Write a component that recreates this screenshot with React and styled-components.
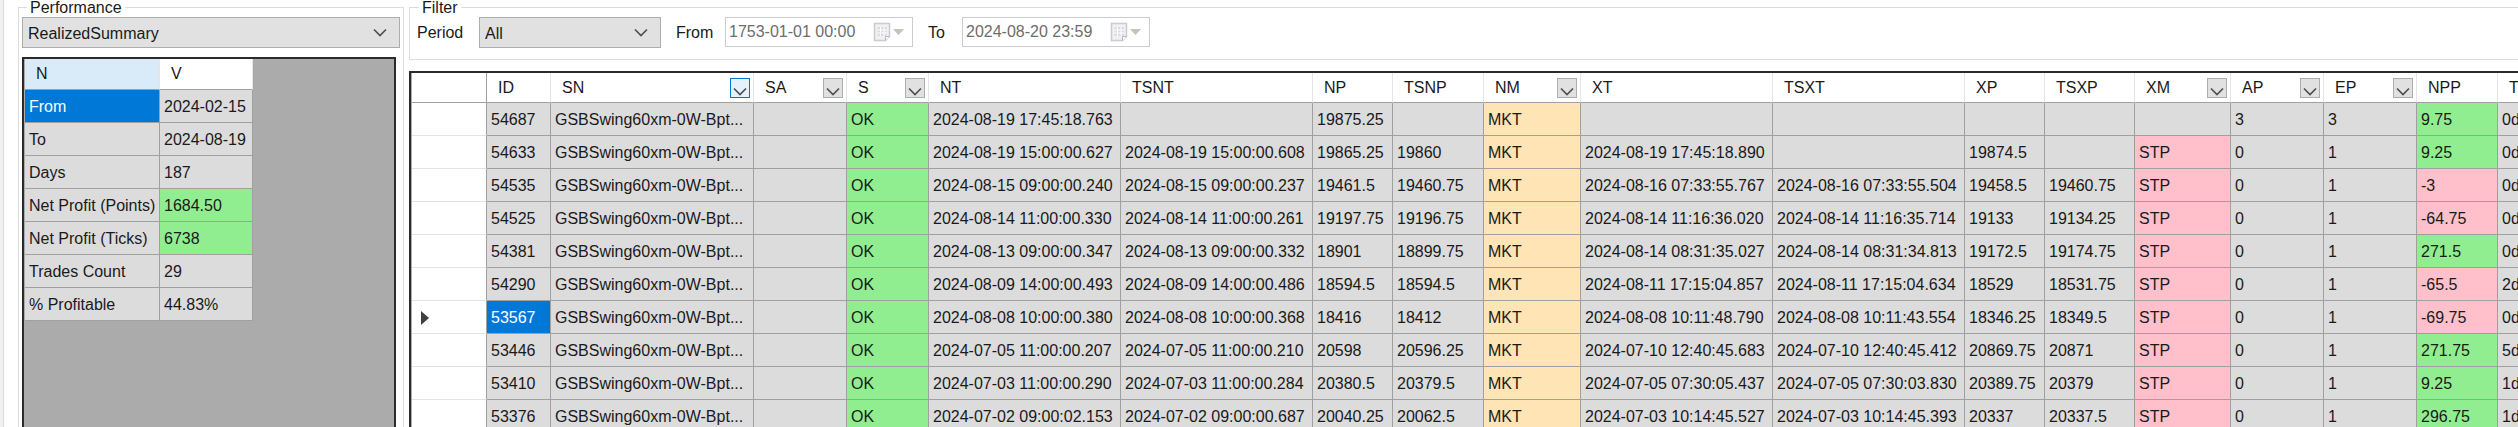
import React from "react";
import styled, { createGlobalStyle, css } from "styled-components";

const GlobalStyle = createGlobalStyle`
    * {
        box-sizing: border-box;
    }

    body {
        margin: 0;
        background: #fff;
    }

    body, button, input, select {
        color: #1a1a1a;
        font-family: "Liberation Sans", Arial, sans-serif;
        font-size: 16px;
    }
`;

const tones = {
    good: "#90ee90",
    bad: "#ffc0cb",
    market: "#ffe4b5"
};

const Page = styled.main`
    display: flex;
    gap: 5px;
    height: 100vh;
    padding-left: 15px;
    overflow: hidden;
    border-left: 3px solid #f0f0f0;
    box-shadow: inset 1px 0 #dcdcdc;
`;

const Sidebar = styled.div`
    display: flex;
    flex: 0 0 386px;
`;

const Content = styled.div`
    display: flex;
    flex: 1;
    flex-direction: column;
    gap: 11px;
    min-width: 0;
`;

const Group = styled.fieldset`
    display: flex;
    flex: ${props => (props.$fill ? 1 : "none")};
    flex-direction: ${props => (props.$fill ? "column" : "row")};
    gap: ${props => (props.$fill ? 9 : 15)}px;
    min-width: 0;
    margin: 0;
    padding: ${props => (props.$fill ? "2px 3px 0" : "2px 7px 10px")};
    border: 1px solid #dcdcdc;
    border-bottom-width: ${props => (props.$fill ? 0 : 1)}px;
    border-right-width: ${props => (props.$fill ? 1 : 0)}px;
`;

const Legend = styled.legend`
    margin-left: ${props => props.$indent}px;
    padding: 0 3px;
    line-height: 15px;
`;

const Field = styled.div`
    display: flex;
    align-items: flex-start;
`;

const Label = styled.label`
    width: ${props => props.$width}px;
    line-height: 32px;
`;

const SelectBox = styled.div`
    display: grid;
    grid-template-columns: 1fr 26px;
    align-items: center;
    width: ${props => props.$width};
    height: 31px;
    border: 1px solid #adadad;
    background: #e1e1e1;

    svg {
        grid-area: 1 / 2;
        pointer-events: none;
    }
`;

const Select = styled.select`
    grid-area: 1 / 1 / 2 / 3;
    width: 100%;
    height: 29px;
    padding: 1px 26px 0 5px;
    border: 0;
    background: transparent;
    appearance: none;
`;

const PickerBox = styled.div`
    display: flex;
    align-items: center;
    width: 188px;
    height: 30px;
    padding-right: 8px;
    border: 1px solid #cccccc;
`;

const PickerInput = styled.input`
    flex: 1;
    min-width: 0;
    padding: 0 0 0 3px;
    border: 0;
    background: transparent;
    color: #6d6d6d;
`;

const PickerButton = styled.button`
    display: flex;
    padding: 0;
    border: 0;
    background: transparent;
`;

const GridFrame = styled.div`
    flex: 1;
    min-height: 0;
    margin-right: ${props => (props.$open ? 0 : 4)}px;
    padding-left: 1px;
    overflow: hidden;
    border: 2px solid #2b2b2b;
    border-bottom: 0;
    border-right-width: ${props => (props.$open ? 0 : 2)}px;
    background: #ababab;
`;

const Table = styled.table`
    width: ${props => props.$width}px;
    table-layout: fixed;
    border-collapse: separate;
    border-spacing: 0;
`;

const HeadCell = styled.th`
    height: ${props => props.$height || 30}px;
    padding: 0 4px 0 11px;
    border-right: 1px solid ${props => (props.$corner ? "#a0a0a0" : "#e5e5e5")};
    border-bottom: 1px solid #a0a0a0;
    background: ${props => (props.$active ? "#d9ebf9" : "#fff")};
    font-weight: normal;
    text-align: left;
    white-space: nowrap;
`;

const HeadContent = styled.div`
    display: flex;
    align-items: center;
    justify-content: space-between;
`;

const FilterButton = styled.button`
    display: flex;
    align-items: flex-end;
    justify-content: center;
    width: 20px;
    height: 20px;
    margin-right: -1px;
    padding: 0 0 1px;
    border: 1px solid ${props => (props.$active ? "#0078d7" : "#adadad")};
    background: ${props => (props.$active ? "#e5f1fb" : "#e1e1e1")};
`;

const Cell = styled.td`
    height: 33px;
    padding: 2px 0 0 4px;
    overflow: hidden;
    border-right: 1px solid #a0a0a0;
    border-bottom: 1px solid #a0a0a0;
    background: ${props => tones[props.$tone] || "#dcdcdc"};
    text-overflow: clip;
    white-space: nowrap;

    ${props => props.$selected && css`
        background: #0078d7;
        color: #fff;
    `}
`;

const RowHeader = styled.th`
    padding: 2px 0 0 9px;
    border-right: 1px solid #a0a0a0;
    border-bottom: 1px solid #e3e3e3;
    background: #fff;
    text-align: left;

    svg {
        display: block;
    }
`;

const summary = [
    ["From", "2024-02-15"],
    ["To", "2024-08-19"],
    ["Days", "187"],
    ["Net Profit (Points)", "1684.50", "good"],
    ["Net Profit (Ticks)", "6738", "good"],
    ["Trades Count", "29"],
    ["% Profitable", "44.83%"]
];

const columns = [
    { name: "ID", width: 64 },
    { name: "SN", width: 203, filter: true, filtered: true },
    { name: "SA", width: 93, filter: true },
    { name: "S", width: 82, filter: true },
    { name: "NT", width: 192 },
    { name: "TSNT", width: 192 },
    { name: "NP", width: 80 },
    { name: "TSNP", width: 91 },
    { name: "NM", width: 97, filter: true },
    { name: "XT", width: 192 },
    { name: "TSXT", width: 192 },
    { name: "XP", width: 80 },
    { name: "TSXP", width: 90 },
    { name: "XM", width: 96, filter: true },
    { name: "AP", width: 93, filter: true },
    { name: "EP", width: 93, filter: true },
    { name: "NPP", width: 81 },
    { name: "T", width: 100 }
];

const rowHeaderWidth = 75;
const tradesWidth = columns.reduce((sum, column) => sum + column.width, rowHeaderWidth);

const SN = "GSBSwing60xm-0W-Bpt...";

const trades = [
    ["54687", SN, "", "OK", "2024-08-19 17:45:18.763", "", "19875.25", "", "MKT", "", "", "", "", "", "3", "3", "9.75", "0d"],
    ["54633", SN, "", "OK", "2024-08-19 15:00:00.627", "2024-08-19 15:00:00.608", "19865.25", "19860", "MKT", "2024-08-19 17:45:18.890", "", "19874.5", "", "STP", "0", "1", "9.25", "0d"],
    ["54535", SN, "", "OK", "2024-08-15 09:00:00.240", "2024-08-15 09:00:00.237", "19461.5", "19460.75", "MKT", "2024-08-16 07:33:55.767", "2024-08-16 07:33:55.504", "19458.5", "19460.75", "STP", "0", "1", "-3", "0d"],
    ["54525", SN, "", "OK", "2024-08-14 11:00:00.330", "2024-08-14 11:00:00.261", "19197.75", "19196.75", "MKT", "2024-08-14 11:16:36.020", "2024-08-14 11:16:35.714", "19133", "19134.25", "STP", "0", "1", "-64.75", "0d"],
    ["54381", SN, "", "OK", "2024-08-13 09:00:00.347", "2024-08-13 09:00:00.332", "18901", "18899.75", "MKT", "2024-08-14 08:31:35.027", "2024-08-14 08:31:34.813", "19172.5", "19174.75", "STP", "0", "1", "271.5", "0d"],
    ["54290", SN, "", "OK", "2024-08-09 14:00:00.493", "2024-08-09 14:00:00.486", "18594.5", "18594.5", "MKT", "2024-08-11 17:15:04.857", "2024-08-11 17:15:04.634", "18529", "18531.75", "STP", "0", "1", "-65.5", "2d"],
    ["53567", SN, "", "OK", "2024-08-08 10:00:00.380", "2024-08-08 10:00:00.368", "18416", "18412", "MKT", "2024-08-08 10:11:48.790", "2024-08-08 10:11:43.554", "18346.25", "18349.5", "STP", "0", "1", "-69.75", "0d"],
    ["53446", SN, "", "OK", "2024-07-05 11:00:00.207", "2024-07-05 11:00:00.210", "20598", "20596.25", "MKT", "2024-07-10 12:40:45.683", "2024-07-10 12:40:45.412", "20869.75", "20871", "STP", "0", "1", "271.75", "5d"],
    ["53410", SN, "", "OK", "2024-07-03 11:00:00.290", "2024-07-03 11:00:00.284", "20380.5", "20379.5", "MKT", "2024-07-05 07:30:05.437", "2024-07-05 07:30:03.830", "20389.75", "20379", "STP", "0", "1", "9.25", "1d"],
    ["53376", SN, "", "OK", "2024-07-02 09:00:02.153", "2024-07-02 09:00:00.687", "20040.25", "20062.5", "MKT", "2024-07-03 10:14:45.527", "2024-07-03 10:14:45.393", "20337", "20337.5", "STP", "0", "1", "296.75", "1d"]
];

const currentTrade = "53567";

const toneOf = (name, value) => {
    if (name === "S" && value === "OK") return "good";
    if (name === "NM" && value === "MKT") return "market";
    if (name === "XM" && value === "STP") return "bad";
    if (name === "NPP") return Number(value) < 0 ? "bad" : "good";
    return undefined;
};

const Chevron = () => (
    <svg width="14" height="9" viewBox="0 0 14 9" fill="none" stroke="#505050" strokeWidth="1.7" aria-hidden="true">
        <path d="M1 1.5l6 6 6-6" />
    </svg>
);

const CalendarIcon = () => (
    <svg width="31" height="20" viewBox="0 0 31 20" aria-hidden="true">
        <path d="M1.500 1.500h15v13l-4 4h-11z" fill="#f1f1f3" stroke="#cbcbcb" strokeWidth="1.500" />
        <path d="M4.500 5h9.500v9h-9.500z" fill="#d9dce2" />
        <path d="M4.500 8h9.500M4.500 11h9.500M7.500 5v9M11 5v9" stroke="#fff" />
        <path d="M12.500 18.500v-4h4" fill="#fff" stroke="#b5b5b5" />
        <path d="M20 7h11l-5.500 6z" fill="#c2c5b8" />
    </svg>
);

const CurrentRowIcon = () => (
    <svg width="8" height="14" viewBox="0 0 8 14" aria-hidden="true">
        <path d="M0 0l8 7-8 7z" fill="#404040" />
    </svg>
);

const DropDown = ({ width, ...rest }) => (
    <SelectBox $width={width}>
        <Select {...rest} />
        <Chevron />
    </SelectBox>
);

const DatePicker = ({ id, value, name }) => (
    <PickerBox>
        <PickerInput id={id} type="text" defaultValue={value} disabled />
        <PickerButton type="button" aria-label={`Open ${name} calendar`} disabled>
            <CalendarIcon />
        </PickerButton>
    </PickerBox>
);

const SummaryTable = () => (
    <Table $width={228}>
        <colgroup>
            <col width="135" />
            <col width="93" />
        </colgroup>
        <thead>
            <tr>
                <HeadCell $height={31} $active>N</HeadCell>
                <HeadCell $height={31}>V</HeadCell>
            </tr>
        </thead>
        <tbody>
            {summary.map(([name, value, tone], index) => (
                <tr key={name}>
                    <Cell $selected={index === 0}>{name}</Cell>
                    <Cell $tone={tone}>{value}</Cell>
                </tr>
            ))}
        </tbody>
    </Table>
);

const TradesTable = () => (
    <Table $width={tradesWidth}>
        <colgroup>
            <col width={rowHeaderWidth} />
            {columns.map(column => <col key={column.name} width={column.width} />)}
        </colgroup>
        <thead>
            <tr>
                <HeadCell $corner />
                {columns.map(column => (
                    <HeadCell key={column.name}>
                        <HeadContent>
                            {column.name}
                            {column.filter && (
                                <FilterButton type="button" aria-label={`Filter ${column.name}`} $active={column.filtered}>
                                    <Chevron />
                                </FilterButton>
                            )}
                        </HeadContent>
                    </HeadCell>
                ))}
            </tr>
        </thead>
        <tbody>
            {trades.map(trade => (
                <tr key={trade[0]}>
                    <RowHeader scope="row">{trade[0] === currentTrade && <CurrentRowIcon />}</RowHeader>
                    {trade.map((value, index) => (
                        <Cell
                            key={columns[index].name}
                            $tone={toneOf(columns[index].name, value)}
                            $selected={index === 0 && value === currentTrade}
                        >
                            {value}
                        </Cell>
                    ))}
                </tr>
            ))}
        </tbody>
    </Table>
);

const App = () => (
    <>
        <GlobalStyle />
        <Page>
            <Sidebar>
                <Group $fill>
                    <Legend $indent={5}>Performance</Legend>
                    <DropDown width="100%" aria-label="Performance">
                        <option>RealizedSummary</option>
                    </DropDown>
                    <GridFrame>
                        <SummaryTable />
                    </GridFrame>
                </Group>
            </Sidebar>
            <Content>
                <Group>
                    <Legend $indent={2}>Filter</Legend>
                    <Field>
                        <Label htmlFor="period" $width={62}>Period</Label>
                        <DropDown width="182px" id="period">
                            <option>All</option>
                        </DropDown>
                    </Field>
                    <Field>
                        <Label htmlFor="from" $width={49}>From</Label>
                        <DatePicker id="from" name="from" value="1753-01-01 00:00" />
                    </Field>
                    <Field>
                        <Label htmlFor="to" $width={34}>To</Label>
                        <DatePicker id="to" name="to" value="2024-08-20 23:59" />
                    </Field>
                </Group>
                <GridFrame $open>
                    <TradesTable />
                </GridFrame>
            </Content>
        </Page>
    </>
);

export default App;
